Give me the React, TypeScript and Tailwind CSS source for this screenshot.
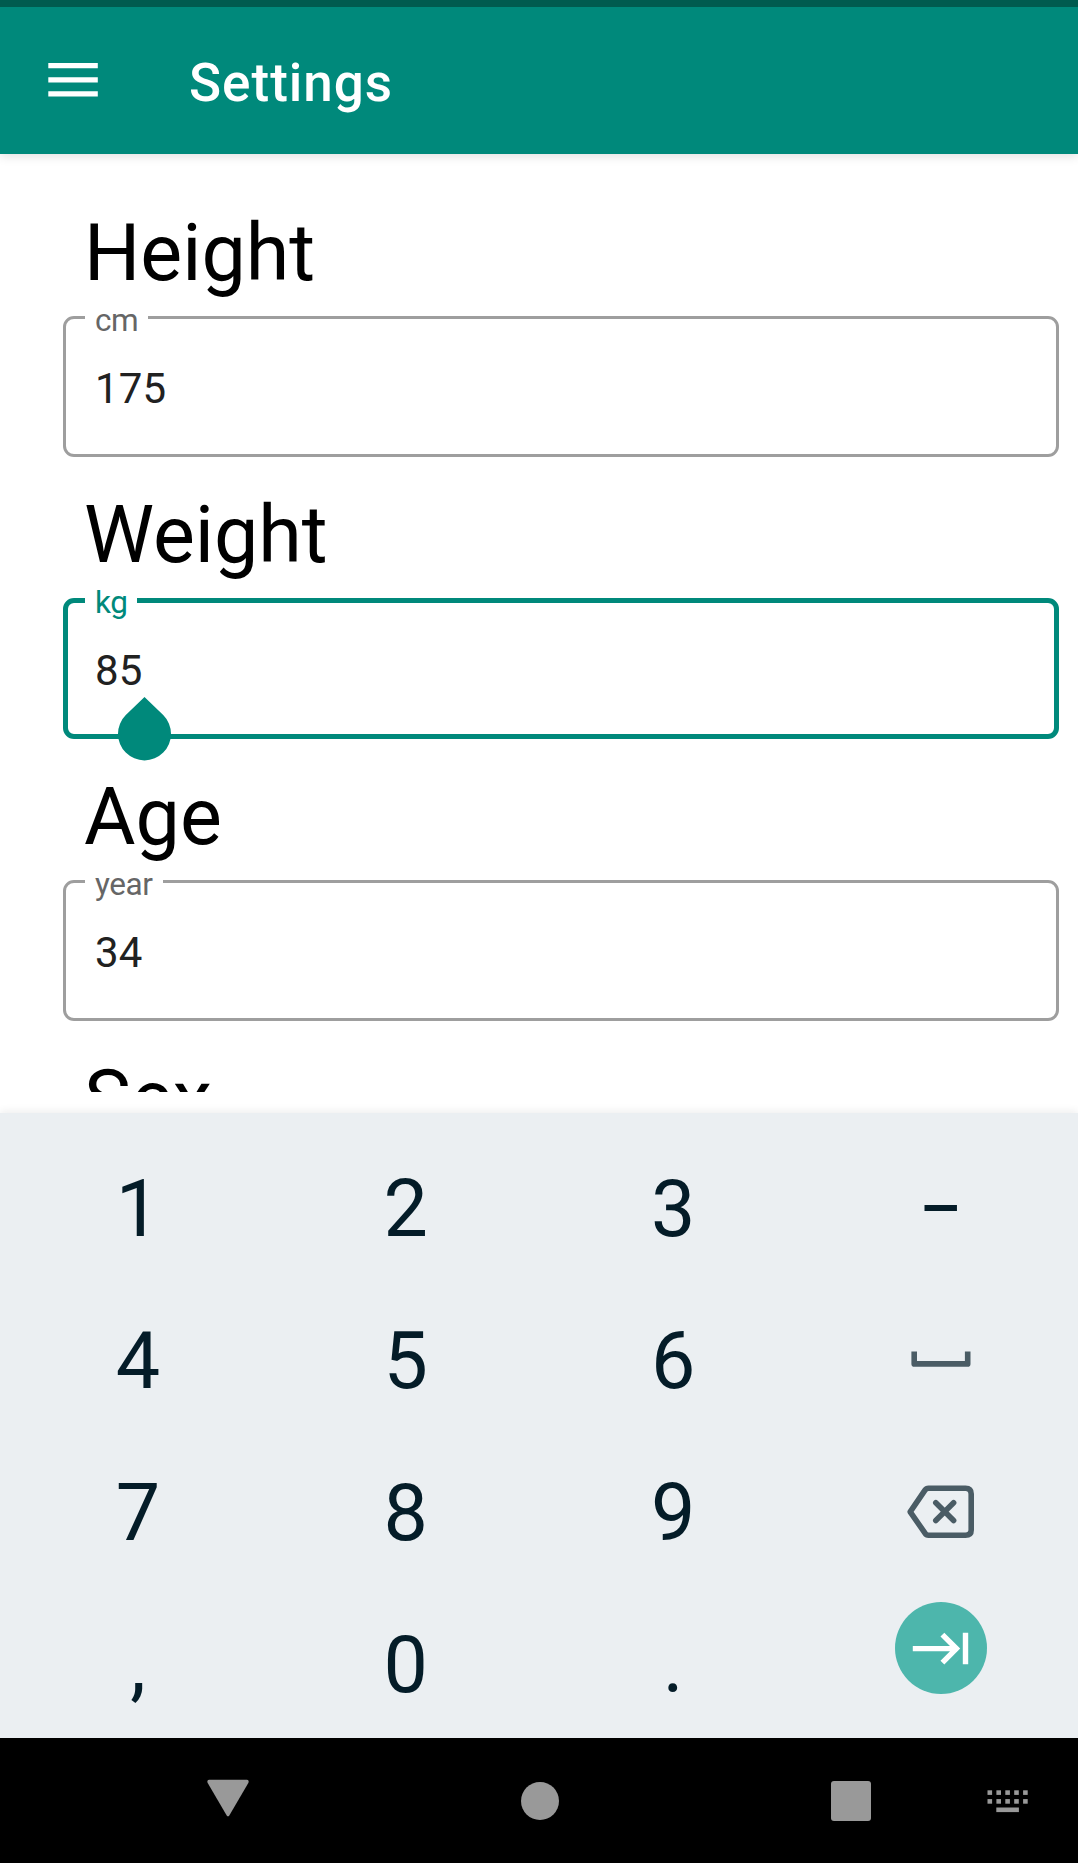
import type { ReactNode } from "react";

type FieldProps = {
  title: string;
  unit: string;
  value: string;
  notch: string;
  focused?: boolean;
};

function Field({ title, unit, value, notch, focused = false }: FieldProps) {
  return (
    <section className="mb-8">
      <h2 className="ml-[21px] h-[92px] text-[79px] leading-[92px] text-black">{title}</h2>
      <div
        className={
          "relative mt-[17px] flex h-[141px] items-center rounded-[11px] pt-1 " +
          (focused ? "border-[5px] border-[#00897b] pl-[27px]" : "border-[3px] border-[#9e9e9e] pl-[29px]")
        }
      >
        <span
          className={
            "absolute flex h-[36px] items-center bg-white pl-[10px] text-[31.5px] leading-[36px] tracking-[-0.4px] " +
            notch +
            (focused ? " -top-[18px] left-[17px] text-[#00897b]" : " -top-[16px] left-[19px] text-[#666666]")
          }
        >
          {unit}
        </span>
        <span className="text-[42px] leading-[50px] tracking-[0.2px] text-[#212121]">{value}</span>
        {focused && (
          <svg className="absolute left-[50px] top-[94px]" width="53" height="64" viewBox="0 0 53 64">
            <path d="M26.5 0 L45.2 18.1 A26.5 26.5 0 1 1 7.8 18.1 Z" fill="#00897b" />
          </svg>
        )}
      </div>
    </section>
  );
}

function Key({ children }: { children: ReactNode }) {
  return <div className="flex h-[152px] items-center justify-center leading-[92px]">{children}</div>;
}

function SpaceIcon() {
  return (
    <svg className="-mt-[5px]" width="60" height="16" viewBox="0 0 60 16">
      <path d="M3.2 0.5 V12.9 H56.7 V0.5" fill="none" stroke="#4a5c65" strokeWidth="5.6" strokeLinejoin="round" />
    </svg>
  );
}

function BackspaceIcon() {
  return (
    <svg className="-mt-[2px]" width="68" height="54" viewBox="0 0 68 54" fill="none" stroke="#4a5c65" strokeWidth="5.6" strokeLinejoin="round">
      <path d="M21.5 3.3 H58.5 Q64.2 3.3 64.2 9 V45 Q64.2 50.2 58.5 50.2 H21.5 Q19.3 50.2 18 48.2 L3.2 26.8 L18 5.2 Q19.3 3.3 21.5 3.3 Z" />
      <path d="M28.8 17.8 L46.6 35.6 M46.6 17.8 L28.8 35.6" strokeLinecap="round" />
    </svg>
  );
}

function NextIcon() {
  return (
    <svg className="-mt-[34px]" width="92" height="92" viewBox="0 0 92 92">
      <circle cx="46" cy="46" r="46" fill="#4db6ac" />
      <path d="M17.8 46.6 H61 M47.4 32.6 L61.4 46.6 L47.4 60.6 M70.5 30.8 V62.2" fill="none" stroke="white" strokeWidth="5.4" />
    </svg>
  );
}

export default function App() {
  return (
    <div className="flex h-[1863px] w-[1078px] flex-col overflow-hidden bg-white font-['Roboto',sans-serif]">
      <header className="z-10 flex h-[154px] shrink-0 items-center border-t-[7px] border-[#005b4f] bg-[#00897b] pl-12 shadow-[0_2px_10px_rgba(0,0,0,0.13)]">
        <svg className="-mt-[2px]" width="50" height="36" viewBox="0 0 50 36" fill="white">
          <path d="M0.3 1h49.5v5.3H0.3zM0.3 15.2h49.5v5.3H0.3zM0.3 29.3h49.5v5.3H0.3z" />
        </svg>
        <h1 className="ml-[91px] mt-[5px] text-[53px] font-medium leading-[62px] tracking-[1px] text-white">Settings</h1>
      </header>

      <main className="h-[938px] shrink-0 overflow-hidden pl-[63px] pr-[19px] pt-[53px]">
        <Field title="Height" unit="cm" value="175" notch="w-[63px]" />
        <Field title="Weight" unit="kg" value="85" notch="w-[52px]" focused />
        <Field title="Age" unit="year" value="34" notch="w-[78px]" />
        <h2 className="ml-[21px] h-[92px] text-[79px] leading-[92px] text-black">Sex</h2>
      </main>

      <div className="mt-[21px] grid h-[625px] shrink-0 grid-cols-[repeat(4,267.6px)] content-start bg-[#ebeff2] pl-[4.2px] pt-5 text-[79px] text-[#041c28] shadow-[0_-2px_8px_rgba(0,0,0,0.07)]">
        <Key>1</Key>
        <Key>2</Key>
        <Key>3</Key>
        <Key><span className="scale-x-[.84]">–</span></Key>
        <Key>4</Key>
        <Key>5</Key>
        <Key>6</Key>
        <Key><SpaceIcon /></Key>
        <Key>7</Key>
        <Key>8</Key>
        <Key>9</Key>
        <Key><BackspaceIcon /></Key>
        <Key>,</Key>
        <Key>0</Key>
        <Key>.</Key>
        <Key><NextIcon /></Key>
      </div>

      <nav className="flex h-[125px] shrink-0 items-start bg-black pt-[41px]">
        <svg className="ml-[207px]" width="42" height="38" viewBox="0 0 42 38">
          <path d="M2 0.7 H40 Q42.5 1.2 41.3 4 L22.3 36.5 Q21 38.2 19.7 36.5 L0.7 4 Q-0.5 1.2 2 0.7Z" fill="#999" />
        </svg>
        <div className="ml-[271.5px] mt-[2.5px] size-[38.5px] rounded-full bg-[#999]" />
        <div className="ml-[272px] mt-[2px] size-10 rounded-[3px] bg-[#999]" />
        <svg className="ml-[116px] mt-[11px]" width="42" height="24" viewBox="0 0 42 24" fill="#999">
          {[0, 1, 2, 3, 4].map((i) => (
            <g key={i}>
              <rect x={0.5 + i * 8.9} y="0.3" width="4.6" height="4.6" />
              <rect x={0.5 + i * 8.9} y="9.1" width="4.6" height="4.6" />
            </g>
          ))}
          <rect x="9.3" y="17.5" width="22.6" height="4.6" />
        </svg>
      </nav>
    </div>
  );
}
